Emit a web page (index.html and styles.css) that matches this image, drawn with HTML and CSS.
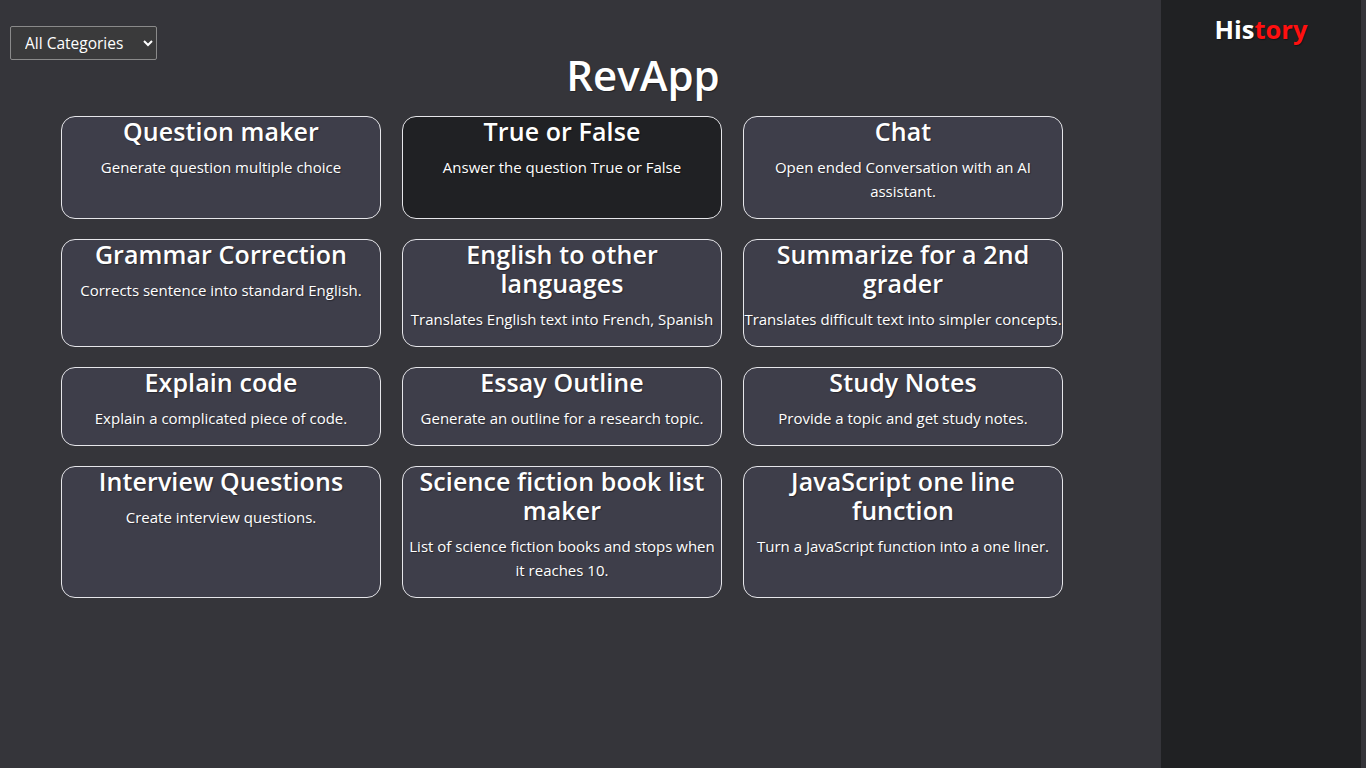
FILE: index.html
```html
<!DOCTYPE html>
<html lang="en">
<head>
<meta charset="utf-8">
<title>RevApp</title>
<link rel="stylesheet" href="styles.css">
</head>
<body>
<div class="layout">
  <main class="main">
    <div class="toolbar">
      <select class="category">
        <option>All Categories</option>
      </select>
    </div>
    <h1 class="app-title">RevApp</h1>
    <div class="grid">
      <div class="card"><h2>Question maker</h2><p>Generate question multiple choice</p></div>
      <div class="card active"><h2>True or False</h2><p>Answer the question True or False</p></div>
      <div class="card"><h2>Chat</h2><p>Open ended Conversation with an AI assistant.</p></div>
      <div class="card"><h2>Grammar Correction</h2><p>Corrects sentence into standard English.</p></div>
      <div class="card"><h2>English to other languages</h2><p>Translates English text into French, Spanish</p></div>
      <div class="card"><h2>Summarize for a 2nd grader</h2><p class="nowrap">Translates difficult text into simpler concepts.</p></div>
      <div class="card"><h2>Explain code</h2><p>Explain a complicated piece of code.</p></div>
      <div class="card"><h2>Essay Outline</h2><p>Generate an outline for a research topic.</p></div>
      <div class="card"><h2>Study Notes</h2><p>Provide a topic and get study notes.</p></div>
      <div class="card"><h2>Interview Questions</h2><p>Create interview questions.</p></div>
      <div class="card"><h2>Science fiction book list maker</h2><p>List of science fiction books and stops when it reaches 10.</p></div>
      <div class="card"><h2>JavaScript one line function</h2><p>Turn a JavaScript function into a one liner.</p></div>
    </div>
  </main>
  <aside class="history">
    <h3 class="history-title">His<span class="red">tory</span></h3>
  </aside>
</div>
</body>
</html>
```
FILE: styles.css
```css
html, body {
  margin: 0;
  padding: 0;
  height: 100%;
}
body {
  background: #35353a;
  color: #fff;
  font-family: "Open Sans", "Noto Sans", sans-serif;
}
.layout {
  display: flex;
  height: 100%;
}
.main {
  width: 1161px;
  flex: none;
}
.toolbar {
  padding: 26px 0 0 10px;
  height: 34px;
}
.category {
  width: 147px;
  height: 34px;
  background: #3a3a3b;
  color: #fff;
  border: 1px solid #8a8a8a;
  border-radius: 2px;
  font-family: "Open Sans", sans-serif;
  font-size: 15.5px;
  padding: 0 8px 0 10px;
}
.app-title {
  margin: -7px 0 0;
  padding-left: 125px;
  text-align: center;
  font-family: "Open Sans", sans-serif;
  font-weight: 600;
  font-size: 42px;
  line-height: 44px;
  text-shadow: 1px 1px 1px rgba(0,0,0,0.35);
}
.grid {
  display: grid;
  grid-template-columns: repeat(3, 320px);
  gap: 20px 21px;
  margin: 19px 0 0 61px;
}
.card {
  background: #3e3e4a;
  border: 1px solid #e6e6ea;
  border-radius: 14px;
  text-align: center;
  padding: 0 0 15px;
}
.card.active {
  background: #202124;
}
.card h2 {
  margin: 0 0 9px;
  font-family: "Open Sans", sans-serif;
  font-weight: 600;
  font-size: 25px;
  letter-spacing: 0.1px;
  line-height: 29px;
  text-shadow: 1px 1px 1px rgba(0,0,0,0.35);
}
.card p {
  margin: 0;
  font-size: 15px;
  line-height: 24px;
  text-shadow: 1px 1px 1px rgba(0,0,0,0.35);
}
.card p.nowrap {
  white-space: nowrap;
}
.history {
  width: 200px;
  flex: none;
  background: #202123;
  height: 100%;
}
.history-title {
  margin: 11px 0 0;
  text-align: center;
  font-family: "Open Sans", sans-serif;
  font-weight: 700;
  font-size: 25.5px;
  line-height: 36px;
  text-shadow: 1px 1px 1px rgba(0,0,0,0.4);
}
.red {
  color: #ff1010;
}
```
